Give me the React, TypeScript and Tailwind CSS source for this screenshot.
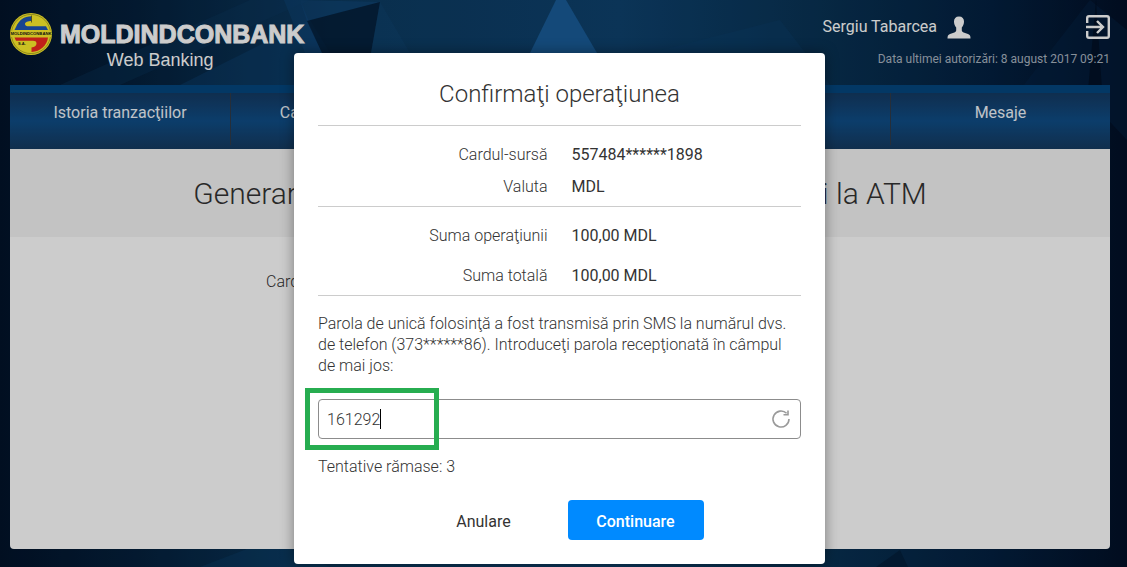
import { useState } from 'react'

const MENIU = [
  { id: 'istoria', label: 'Istoria tranzacţiilor' },
  { id: 'carduri', label: 'Carduri şi conturi' },
  { id: 'plati', label: 'Plăţi' },
  { id: 'setari', label: 'Setări' },
  { id: 'mesaje', label: 'Mesaje' },
]

const DETALII = [
  { label: 'Cardul-sursă', value: '557484******1898' },
  { label: 'Valuta', value: 'MDL' },
]

const SUME = [
  { label: 'Suma operaţiunii', value: '100,00 MDL' },
  { label: 'Suma totală', value: '100,00 MDL' },
]

function Fundal() {
  return (
    <svg
      className="absolute inset-0 -z-10 h-full w-full"
      viewBox="0 0 1127 567"
      preserveAspectRatio="xMidYMid slice"
      aria-hidden="true"
    >
      <defs>
        <linearGradient id="baza" x1="0" x2="1" y1="0" y2="0">
          <stop offset="0" stopColor="#02132a" />
          <stop offset="0.12" stopColor="#04203c" />
          <stop offset="0.3" stopColor="#0c3a60" />
          <stop offset="0.55" stopColor="#0e416d" />
          <stop offset="0.72" stopColor="#093355" />
          <stop offset="0.88" stopColor="#032040" />
          <stop offset="1" stopColor="#021027" />
        </linearGradient>
      </defs>
      <rect width="1127" height="567" fill="url(#baza)" />
      <polygon points="120,85 310,0 250,0 60,85" fill="#0c3a63" opacity="0.3" />
      <polygon points="180,85 310,20 330,53 300,85" fill="#0f477b" opacity="0.35" />
      <polygon points="284,0 300,0 322,53 305,53" fill="#13518a" opacity="0.3" />
      <polygon points="300,0 380,2 307,21" fill="#15508a" opacity="0.35" />
      <polygon points="307,21 380,2 371,53 322,53" fill="#03162c" opacity="0.65" />
      <polygon points="380,2 410,53 371,53" fill="#114775" opacity="0.35" />
      <polygon points="556,0 566,0 597,53 530,53" fill="#195c98" />
      <polygon points="650,53 780,20 830,85 700,85" fill="#0d426f" opacity="0.3" />
      <polygon points="1090,0 1127,30 1127,140 1080,90 1020,90" fill="#07294d" opacity="0.35" />
      <polygon points="1096,0 1102,90 1088,90" fill="#010c1d" opacity="0.6" />
      <polygon points="200,567 330,567 270,540" fill="#0d4a7d" opacity="0.25" />
      <polygon points="876,567 900,550 908,567" fill="#031c36" opacity="0.7" />
    </svg>
  )
}

function Emblema() {
  return (
    <svg className="h-[42px] w-[42px] shrink-0" viewBox="0 0 42 42" aria-hidden="true">
      <circle cx="21" cy="21" r="21" fill="#fff02c" />
      <circle cx="21" cy="21" r="19.6" fill="none" stroke="#6f6b1c" strokeWidth="0.5" />
      <path d="M6 14C9 7 14 3.300 21.500 3.200v4.800c-3.500 0-6.500 1-6.500 3 0 1.800 1.500 2.300 3.500 2.300h17.500l2 3.700H4.500z" fill="#1f56b4" />
      <path d="M4.500 24.500h33.500c-1 8-7.500 14-16.500 14.500v-4.500c3-.5 5-1.500 5-4 0-2-1.500-2.700-3.500-2.700H6z" fill="#f02a20" />
      <path d="M21.500 2.500v7" stroke="#55521a" strokeWidth="0.8" />
      <rect x="1" y="17.500" width="40" height="6.500" fill="#fff02c" />
      <text
        x="21"
        y="22.300"
        textAnchor="middle"
        fontSize="4.200"
        fill="#151515"
        className="font-['Liberation_Sans',sans-serif] font-bold"
      >
        MOLDINDCONBANK
      </text>
      <text
        x="8"
        y="32"
        fontSize="4"
        fill="#151515"
        className="font-['Liberation_Sans',sans-serif] font-bold"
      >
        S.A.
      </text>
    </svg>
  )
}

function Antet() {
  return (
    <header className="flex h-[85px] items-start justify-between pt-[13px]">
      <div className="flex items-start gap-2 font-['Liberation_Sans',sans-serif] text-white">
        <Emblema />
        <div className="pt-2 text-center">
          <div className="text-[25px] leading-[26px] font-bold [-webkit-text-stroke:1px_white]">MOLDINDCONBANK</div>
          <div className="pr-11 text-lg leading-[26px]">Web Banking</div>
        </div>
      </div>

      <div className="text-right">
        <div className="flex items-center justify-end text-white">
          <span className="text-base leading-7">Sergiu Tabarcea</span>
          <svg className="ml-[10px] h-6 w-6" viewBox="0 0 24 24" fill="currentColor" aria-hidden="true">
            <path d="M12 1.500c-3.300 0-5 2.100-5 5.100 0 2.300.8 4.400 2.200 5.800v2.800c0 1.100-.6 1.700-1.800 2.200l-4.400 1.600C1 19.800.5 21 .5 23.500h23c0-2.500-.5-3.700-2.500-4.500l-4.400-1.600c-1.200-.5-1.800-1.100-1.800-2.200v-2.800c1.400-1.400 2.200-3.500 2.200-5.800 0-3-1.700-5.100-5-5.100z" />
          </svg>
          <button type="button" aria-label="Ieşire" className="ml-[115px]">
            <svg className="h-6 w-6" viewBox="0 0 24 24" fill="none" stroke="currentColor" strokeWidth="2.400" aria-hidden="true">
              <path d="M1.200 8V3c0-1 .8-1.800 1.800-1.800h18c1 0 1.800.8 1.800 1.800v18c0 1-.8 1.800-1.800 1.800H3c-1 0-1.800-.8-1.800-1.800v-5" />
              <path d="M0 12h16.500M11 6l6 6-6 6" />
            </svg>
          </button>
        </div>
        <p className="mt-2 text-xs leading-5 text-[#a9b4c0]">Data ultimei autorizări: 8 august 2017 09:21</p>
      </div>
    </header>
  )
}

function Meniu() {
  return (
    <nav className="grid h-16 grid-cols-5 border-t-8 border-[#04467f] bg-linear-to-b from-[#133a63] via-[#0f4d86] to-[#143a60]">
      {MENIU.map(({ id, label }) => (
        <a
          key={id}
          href={`#${id}`}
          className="mb-1 flex justify-center border-l border-[#303a48] pt-2 text-base leading-6 text-[#eef4fa] first:border-l-0"
        >
          {label}
        </a>
      ))}
    </nav>
  )
}

function Randuri({ items, className }: { items: typeof DETALII; className: string }) {
  return (
    <>
      {items.map(({ label, value }) => (
        <div key={label} className={`grid grid-cols-2 items-center gap-6 pt-[2px] ${className}`}>
          <dt className="text-right font-light">{label}</dt>
          <dd>{value}</dd>
        </div>
      ))}
    </>
  )
}

function Confirmare() {
  const [parola, setParola] = useState('161292')

  return (
    <div className="absolute inset-0 flex items-start justify-center bg-black/20 pt-[53px] pr-2">
      <form
        role="dialog"
        aria-labelledby="titlu-confirmare"
        className="w-full max-w-[531px] rounded bg-white px-6 pb-6 text-base text-[#333] shadow-[0_0_14px_rgba(0,0,0,0.4)]"
        onSubmit={(e) => e.preventDefault()}
      >
        <h2 id="titlu-confirmare" className="border-b border-[#ccc] pt-[25px] pb-[15px] text-center text-2xl leading-8 font-light">
          Confirmaţi operaţiunea
        </h2>
        <dl className="border-b border-[#ccc] pt-3 pb-1">
          <Randuri items={DETALII} className="h-8" />
        </dl>
        <dl className="border-b border-[#ccc] pt-2">
          <Randuri items={SUME} className="h-10" />
        </dl>

        <label htmlFor="parola" className="mt-[17px] block leading-[21px] font-light">
          Parola de unică folosinţă a fost transmisă prin SMS la numărul dvs. de telefon (373******86). Introduceţi
          parola recepţionată în câmpul de mai jos:
        </label>
        <div className="relative mt-[23px] flex h-10 items-center rounded border border-[#8c8c8c] px-2">
          <input
            id="parola"
            value={parola}
            onChange={(e) => setParola(e.target.value)}
            className="min-w-0 flex-1 pt-[2px] font-light outline-none"
          />
          <span className="absolute top-[9px] left-[61px] h-5 w-px bg-black" />
          <button type="button" aria-label="Retrimite parola" className="text-[#9a9a9a]">
            <svg className="h-[22px] w-[22px]" viewBox="0 0 22 22" fill="none" stroke="currentColor" strokeWidth="1.600" aria-hidden="true">
              <path d="M19 11a8 8 0 1 1-2.400-5.700" />
              <path d="M18 2.500v4.300h-4.500" />
            </svg>
          </button>
          <span className="pointer-events-none absolute -top-3 -left-[14px] h-[62px] w-[134px] border-5 border-[#27ad50]" />
        </div>
        <p className="mt-4 leading-6 font-light">Tentative rămase: 3</p>

        <div className="mt-[21px] flex justify-center gap-4">
          <button type="button" className="h-10 w-[136px] rounded pt-[3px]">
            Anulare
          </button>
          <button type="submit" className="h-10 w-[136px] rounded bg-[#008aff] pt-[3px] font-medium text-white">
            Continuare
          </button>
        </div>
      </form>
    </div>
  )
}

export default function App() {
  return (
    <div className="relative isolate flex min-h-screen flex-col overflow-hidden pr-[17px] pb-[18px] pl-[10px] font-[Roboto,sans-serif]">
      <Fundal />
      <Antet />
      <Meniu />
      <main className="flex-1 rounded-b bg-white text-[#333]">
        <h1 className="bg-[#f4f4f4] pt-[25px] pb-[23px] text-center text-[30px] leading-10 font-light">
          Generarea parolei pentru retragerea banilor doriţi la ATM
        </h1>
        <p className="pt-[33px] pl-64 text-base leading-6 font-light">Cardul-sursă</p>
      </main>
      <Confirmare />
    </div>
  )
}
